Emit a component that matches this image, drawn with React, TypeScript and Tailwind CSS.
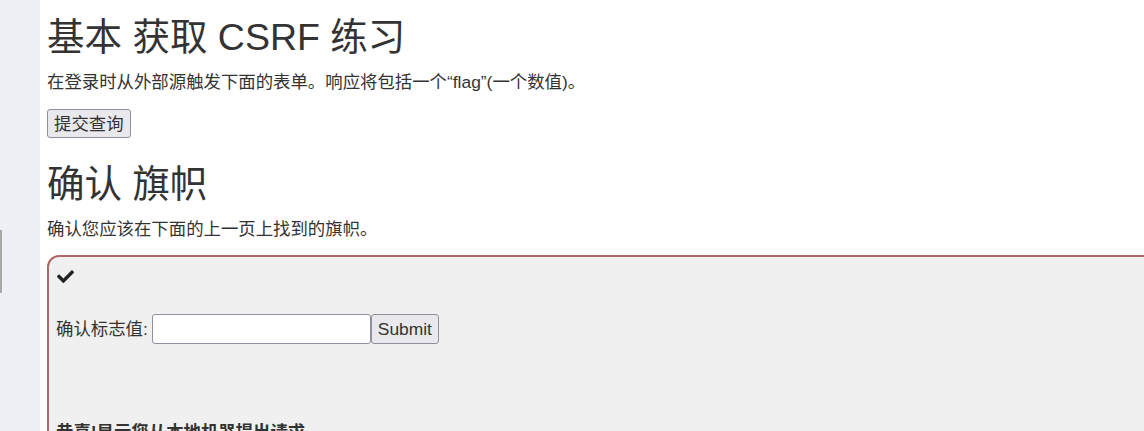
import React from "react";

const font = { fontFamily: '"Liberation Sans", "Noto Sans CJK SC", Arial, sans-serif' };

export default function App() {
  return (
    <div className="flex h-[431px] overflow-hidden bg-white text-[#333333]" style={font}>
      <div className="w-[40px] shrink-0 bg-[#eff0f6]">
        <div className="mt-[230px] h-[63px] w-[2px] bg-[#a9a9a9]" />
      </div>
      <div className="flex-1 overflow-hidden pl-[7px]">
        <h1 className="mt-[17px] text-[37.5px] leading-[41px] font-normal whitespace-nowrap">基本 获取 CSRF 练习</h1>
        <p className="mt-[12px] text-[17.4px] leading-[24px] whitespace-nowrap">在登录时从外部源触发下面的表单。响应将包括一个“flag”(一个数值)。</p>
        <button className="mt-[15px] h-[29px] px-[6px] text-[17.4px] leading-[20px] border border-[#8f8f9d] rounded-[3px] bg-[#e9e9ed]">提交查询</button>
        <h2 className="mt-[26px] text-[37.5px] leading-[41px] font-normal whitespace-nowrap">确认 旗帜</h2>
        <p className="mt-[12px] text-[17.4px] leading-[24px] whitespace-nowrap">确认您应该在下面的上一页上找到的旗帜。</p>
        <div className="mt-[14px] w-[1200px] h-[200px] border-2 border-[#b06666] rounded-tl-[12px] bg-[#f0f0f0] pl-[7px] pt-[11px]">
          <svg width="17" height="15" viewBox="0 0 512 448" className="ml-[1px]">
            <path fill="#222" d="M173.9 439.4L7.5 273c-10-10-10-26.2 0-36.2l36.2-36.2c10-10 26.2-10 36.2 0L192 312.7 432.1 72.6c10-10 26.2-10 36.2 0l36.2 36.2c10 10 10 26.2 0 36.2L210.1 439.4c-10 10-26.2 10-36.2 0z" />
          </svg>
          <div className="mt-[31px] flex items-center h-[30px]">
            <span className="text-[17.4px] whitespace-nowrap">确认标志值:</span>
            <input type="text" className="ml-[4px] h-[30px] w-[219px] border border-[#8f8f9d] rounded-[3px] bg-white" />
            <button className="h-[30px] px-[6px] text-[17.4px] border border-[#8f8f9d] rounded-[3px] bg-[#e9e9ed]">Submit</button>
          </div>
          <p className="mt-[76px] text-[17.4px] font-bold whitespace-nowrap leading-[24px]">恭喜!显示您从本地机器提出请求。</p>
        </div>
      </div>
    </div>
  );
}
